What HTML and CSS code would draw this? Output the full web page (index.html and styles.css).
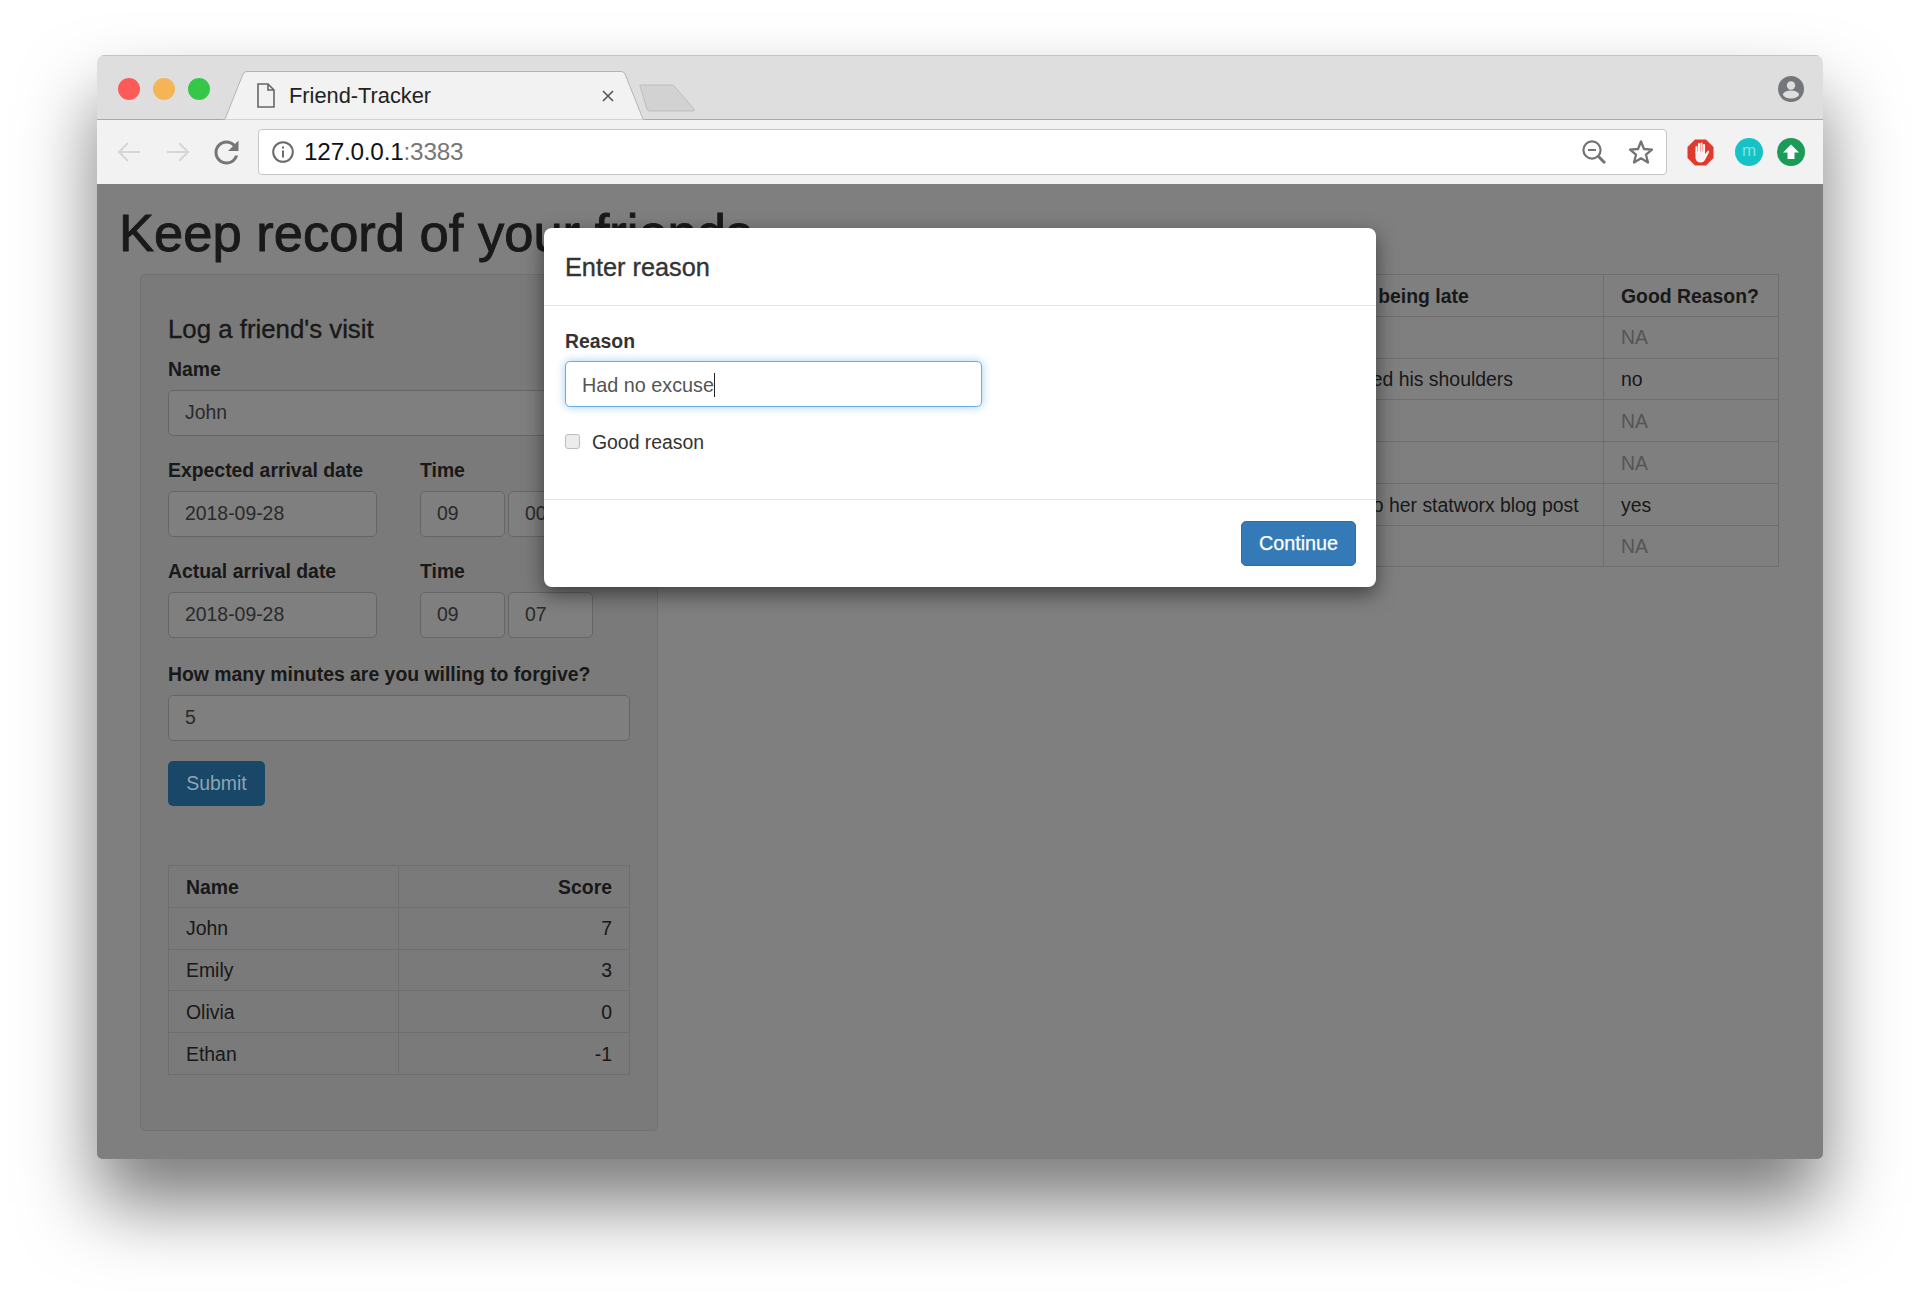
FILE: index.html
```html
<!DOCTYPE html>
<html lang="en">
<head>
<meta charset="utf-8">
<title>Friend-Tracker</title>
<link rel="stylesheet" href="styles.css">
</head>
<body>
<div class="window">
  <header class="tabbar">
    <div class="lights"><span class="light red"></span><span class="light yellow"></span><span class="light green"></span></div>
    <div class="tab">
      <svg class="tab-shape" viewBox="0 0 422 49" preserveAspectRatio="none"><path d="M0 49 L2 48 L20 3 Q21 .5 24 .5 L398 .5 Q401 .5 402 3 L420 48 L422 49 Z" fill="#f2f2f2" stroke="#b4b4b4" stroke-width="1"/></svg>
      <svg class="doc-icon" viewBox="0 0 18 25"><path d="M1 1 H11 L17 7 V24 H1 Z M11 1 V7 H17" fill="none" stroke="#666" stroke-width="1.6"/></svg>
      <span class="tab-title">Friend-Tracker</span>
      <svg class="tab-close" viewBox="0 0 12 12"><path d="M1 1 L11 11 M11 1 L1 11" stroke="#555" stroke-width="1.6"/></svg>
    </div>
    <svg class="newtab" viewBox="0 0 58 28"><path d="M2 2 Q1 1 3 1 H34 Q36 1 37 3 L56 25 Q57 27 55 27 H12 Q10 27 9 25 Z" fill="#d2d2d2" stroke="#bdbdbd"/></svg>
    <svg class="profile" viewBox="0 0 26 26"><defs><clipPath id="pc"><circle cx="13" cy="13" r="13"/></clipPath></defs><circle cx="13" cy="13" r="13" fill="#73767a"/><g clip-path="url(#pc)"><circle cx="13" cy="9.5" r="4.2" fill="#dedede"/><ellipse cx="13" cy="18.5" rx="8" ry="4" fill="#dedede"/></g></svg>
  </header>
  <nav class="toolbar">
    <svg class="nav-arrow" viewBox="0 0 24 22"><path d="M23 11 H2 M11 2 L2 11 L11 20" fill="none" stroke="#d6d6d6" stroke-width="2"/></svg>
    <svg class="nav-arrow forward" viewBox="0 0 24 22"><path d="M1 11 H22 M13 2 L22 11 L13 20" fill="none" stroke="#d6d6d6" stroke-width="2"/></svg>
    <svg class="reload" viewBox="3 3 18 18"><path fill="#767676" d="M17.65 6.35A7.958 7.958 0 0 0 12 4c-4.42 0-7.99 3.58-7.99 8s3.57 8 7.99 8c3.73 0 6.84-2.55 7.73-6h-2.08A5.99 5.99 0 0 1 12 18c-3.31 0-6-2.69-6-6s2.69-6 6-6c1.66 0 3.14.69 4.22 1.78L13 11h7V4l-2.35 2.35z"/></svg>
    <div class="address">
      <svg class="info" viewBox="0 0 22 22"><circle cx="11" cy="11" r="9.8" fill="none" stroke="#6a6a6a" stroke-width="2"/><rect x="10" y="9.5" width="2" height="7" fill="#6a6a6a"/><rect x="10" y="5.5" width="2" height="2" fill="#6a6a6a"/></svg>
      <span class="url"><span class="host">127.0.0.1</span><span class="port">:3383</span></span>
      <svg class="zoom-out" viewBox="0 0 24 24"><circle cx="10" cy="10" r="8.6" fill="none" stroke="#737373" stroke-width="2.2"/><path d="M6 10 H14" stroke="#737373" stroke-width="2"/><path d="M16.5 16.5 L23 23" stroke="#737373" stroke-width="3"/></svg>
      <svg class="star" viewBox="0 0 26 26"><path d="M13 2.5 L16 10 L24 10.6 L18 15.7 L20 23.5 L13 19.3 L6 23.5 L8 15.7 L2 10.6 L10 10 Z" fill="none" stroke="#737373" stroke-width="2.3" stroke-linejoin="round"/></svg>
    </div>
    <svg class="ext ext-stop" viewBox="0 0 27 27">
      <path d="M8 .5 H19 L26.5 8 V19 L19 26.5 H8 L.5 19 V8 Z" fill="#e0392e"/>
      <path d="M9.5 14 V8 M12 14 V5 M14.5 14 V4.5 M17 14 V6" stroke="#fbf1f0" stroke-width="2.1" stroke-linecap="round" fill="none"/>
      <path d="M8.5 12.5 H18 V15 L21 11.5 Q22.5 11.5 22 13.5 L18.5 20 Q17 23.5 13.5 23.5 Q9.5 23.5 8.5 19.5 Z" fill="#fbf1f0"/>
    </svg>
    <span class="ext ext-m">m</span>
    <svg class="ext ext-up" viewBox="0 0 28 28"><circle cx="14" cy="14" r="14" fill="#1b9a58"/><path d="M14 6.5 L22 14.5 H17.5 V21 H10.5 V14.5 H6 Z" fill="#fff"/></svg>
  </nav>
  <main class="content">
    <h1 class="page-title">Keep record of your friends</h1>
    <div class="columns">
      <section class="well">
        <h3 class="well-title">Log a friend's visit</h3>
        <div class="group">
          <label class="label">Name</label>
          <input class="control" type="text" value="John" readonly>
        </div>
        <div class="group datetime">
          <div class="date-col">
            <label class="label">Expected arrival date</label>
            <input class="control" type="text" value="2018-09-28" readonly>
          </div>
          <div class="time-col">
            <label class="label">Time</label>
            <div class="time-inputs">
              <input class="control" type="text" value="09" readonly>
              <input class="control" type="text" value="00" readonly>
            </div>
          </div>
        </div>
        <div class="group datetime">
          <div class="date-col">
            <label class="label">Actual arrival date</label>
            <input class="control" type="text" value="2018-09-28" readonly>
          </div>
          <div class="time-col">
            <label class="label">Time</label>
            <div class="time-inputs">
              <input class="control" type="text" value="09" readonly>
              <input class="control" type="text" value="07" readonly>
            </div>
          </div>
        </div>
        <div class="group group-forgive">
          <label class="label">How many minutes are you willing to forgive?</label>
          <input class="control" type="text" value="5" readonly>
        </div>
        <button class="btn btn-submit">Submit</button>
        <table class="table score-table">
          <thead><tr><th class="score-name">Name</th><th class="num">Score</th></tr></thead>
          <tbody>
            <tr><td>John</td><td class="num">7</td></tr>
            <tr><td>Emily</td><td class="num">3</td></tr>
            <tr><td>Olivia</td><td class="num">0</td></tr>
            <tr><td>Ethan</td><td class="num">-1</td></tr>
          </tbody>
        </table>
      </section>
      <table class="table visits-table">
        <colgroup><col class="col-name"><col class="col-reason"><col class="col-good"></colgroup>
        <thead><tr><th>Name</th><th>Reason for being late</th><th>Good Reason?</th></tr></thead>
        <tbody>
          <tr><td>Emily</td><td></td><td class="na">NA</td></tr>
          <tr><td>John</td><td>Just shrugged his shoulders</td><td>no</td></tr>
          <tr><td>Ethan</td><td></td><td class="na">NA</td></tr>
          <tr><td>Emily</td><td></td><td class="na">NA</td></tr>
          <tr><td>Olivia</td><td>Mentioned to her statworx blog post</td><td>yes</td></tr>
          <tr><td>John</td><td></td><td class="na">NA</td></tr>
        </tbody>
      </table>
    </div>
    <div class="backdrop"></div>
    <div class="modal-layer">
      <div class="modal">
        <div class="modal-header"><h4 class="modal-title">Enter reason</h4></div>
        <div class="modal-body">
          <label class="label">Reason</label>
          <div class="control focused"><span class="typed">Had no excuse</span></div>
          <label class="check"><input class="checkbox" type="checkbox"><span>Good reason</span></label>
        </div>
        <div class="modal-footer"><button class="btn btn-primary">Continue</button></div>
      </div>
    </div>
  </main>
</div>
</body>
</html>
```
FILE: styles.css
```css
* { box-sizing: border-box; }
html, body { margin: 0; padding: 0; background: #fff; }
body {
  height: 1298px;
  overflow: hidden;
  font-family: "Liberation Sans", Arial, sans-serif;
  font-size: 19.4px;
  color: #333;
  padding: 55px 97px 0;
}
.window {
  width: 1726px;
  height: 1104px;
  border-radius: 8px 8px 5px 5px;
  box-shadow: 0 45px 75px rgba(0,0,0,.52);
  display: flex;
  flex-direction: column;
  overflow: hidden;
  background: #fff;
}

/* tab strip */
.tabbar {
  height: 65px;
  flex: none;
  background: #dedede;
  border-top: 1px solid #c4c4c4;
  border-bottom: 1px solid #a8a8a8;
  display: flex;
  align-items: flex-start;
  position: relative;
}
.lights { display: flex; gap: 13px; margin: 22px 0 0 21px; }
.light { width: 22px; height: 22px; border-radius: 50%; display: block; }
.light.red { background: #fc5b57; }
.light.yellow { background: #f5b556; }
.light.green { background: #34c748; }
.tab {
  position: relative;
  width: 422px;
  height: 49px;
  margin: 15px 0 0 13px;
  display: flex;
  align-items: center;
  padding-left: 34px;
}
.tab-shape { position: absolute; inset: 0; width: 100%; height: 100%; }
.doc-icon { position: relative; width: 18px; height: 25px; flex: none; }
.tab-title { position: relative; margin-left: 14px; font-size: 21.8px; color: #222; }
.tab-close { position: relative; width: 12px; height: 12px; margin-left: auto; margin-right: 31px; }
.newtab { width: 58px; height: 28px; margin: 28px 0 0 -7px; flex: none; }
.profile { width: 26px; height: 26px; margin: 20px 19px 0 auto; flex: none; }

/* toolbar */
.toolbar {
  height: 64px;
  flex: none;
  background: #f2f2f2;
  display: flex;
  align-items: center;
  padding-left: 20px;
}
.nav-arrow { width: 24px; height: 22px; flex: none; }
.nav-arrow.forward { margin-left: 25px; }
.reload { width: 27px; height: 27px; margin-left: 23px; flex: none; }
.address {
  margin-left: 18px;
  width: 1409px;
  height: 46px;
  background: #fff;
  border: 1px solid #c6c6c6;
  border-radius: 4px;
  display: flex;
  align-items: center;
  padding: 0 12px 0 13px;
  flex: none;
}
.info { width: 22px; height: 22px; flex: none; }
.url { margin-left: 10px; font-size: 24.3px; letter-spacing: -.2px; }
.host { color: #111; }
.port { color: #777; }
.zoom-out { width: 24px; height: 24px; margin-left: auto; }
.star { width: 26px; height: 26px; margin-left: 22px; }
.ext { flex: none; display: block; }
.ext-stop { width: 27px; height: 27px; margin-left: 20px; }
.ext-m {
  width: 28px;
  height: 28px;
  margin-left: 21px;
  border-radius: 50%;
  background: #15c3c7;
  color: #7fe3e0;
  font-size: 17px;
  line-height: 26px;
  text-align: center;
}
.ext-up { width: 28px; height: 28px; margin-left: 14px; }

/* page */
.content { position: relative; flex: 1; background: #fff; overflow: hidden; padding: 19px 0 0 22px; }
.page-title { margin: 0 0 12px; font-size: 52.5px; line-height: 59px; font-weight: 400; -webkit-text-stroke: .9px #333; }
.columns { display: flex; align-items: flex-start; margin-left: 21px; }
.well {
  width: 518px;
  height: 857px;
  flex: none;
  background: #f5f5f5;
  border: 1px solid #e3e3e3;
  border-radius: 5px;
  padding: 41px 27px 0;
}
.well-title { margin: 0 0 13px; font-size: 25.8px; line-height: 27px; font-weight: 400; -webkit-text-stroke: .35px #333; }
.label { display: block; font-weight: 700; line-height: 27px; margin-bottom: 6.5px; }
.group { margin-bottom: 21.5px; }
.group-forgive { margin-top: 23px; margin-bottom: 20.5px; }
.group-forgive .label { margin-bottom: 7px; }
.control {
  display: block;
  width: 100%;
  height: 46px;
  padding: 0 16px;
  font: inherit;
  color: #555;
  background: #fff;
  border: 1px solid #ccc;
  border-radius: 5px;
  outline: none;
}
.datetime { display: flex; gap: 43px; }
.date-col { width: 209px; flex: none; }
.time-col { width: 173px; flex: none; }
.time-inputs { display: flex; gap: 3px; }
.btn {
  display: block;
  height: 45px;
  font: inherit;
  border-radius: 5px;
  border: 1px solid transparent;
}
.btn-submit {
  position: relative;
  z-index: 11;
  width: 97px;
  background: #184768;
  color: #8fa4b4;
}
.table { border-collapse: collapse; border: 1px solid #ddd; }
.table th, .table td {
  border: 1px solid #ddd;
  padding: 7.6px 17px 6.2px;
  line-height: 27px;
  text-align: left;
  white-space: nowrap;
}
.table .num { text-align: right; }
.score-table { width: 462px; margin-top: 59px; table-layout: fixed; }
.table .score-name { width: 230px; }
.visits-table { width: 1097px; margin-left: 23px; table-layout: fixed; }
.col-name { width: 572.5px; }
.col-reason { width: 349.5px; }
.col-good { width: 175px; }
.na { color: #aaa; }

/* modal */
.backdrop { position: absolute; inset: 0; z-index: 10; background: rgba(0,0,0,.5); }
.modal-layer {
  position: absolute;
  inset: 0;
  z-index: 20;
  display: flex;
  justify-content: center;
  align-items: flex-start;
  padding-top: 44px;
}
.modal {
  width: 832px;
  background: #fff;
  border-radius: 8px;
  box-shadow: 0 7px 20px rgba(0,0,0,.5);
}
.modal-header { height: 78px; padding: 21px; border-bottom: 1px solid #e5e5e5; }
.modal-title { margin: 0; font-size: 25.3px; line-height: 36px; font-weight: 400; -webkit-text-stroke: .35px #333; }
.modal-body { padding: 21.5px 21px 43px; }
.focused {
  width: 417px;
  display: flex;
  align-items: center;
  border-color: #66afe9;
  box-shadow: 0 0 10px rgba(102,175,233,.6);
}
.typed { border-right: 1px solid #222; line-height: 24px; margin-top: 1px; font-size: 19.8px; }
.check { display: flex; align-items: center; height: 27px; margin-top: 22px; line-height: 27px; }
.checkbox {
  appearance: none;
  width: 15px;
  height: 15px;
  margin: -2px 12px 0 0;
  background: #ececec;
  border: 1px solid #bcbcbc;
  border-radius: 3px;
}
.modal-footer { display: flex; justify-content: flex-end; padding: 21px 20px 21px; border-top: 1px solid #e5e5e5; }
.btn-primary { width: 115px; background: #337ab7; border-color: #2e6da4; color: #fff; font-size: 19.8px; -webkit-text-stroke: .25px #fff; }
```
